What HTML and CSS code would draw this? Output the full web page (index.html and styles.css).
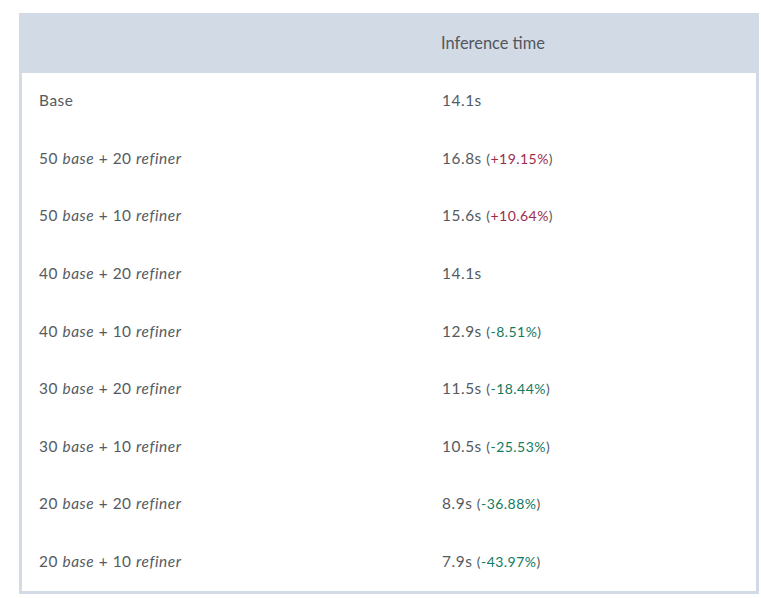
FILE: index.html
```html
<!DOCTYPE html>
<html>
<head>
<meta charset="utf-8">
<link rel="stylesheet" href="styles.css">
</head>
<body>
<div class="wrap">
<table class="tbl">
<thead>
<tr><th class="c1"></th><th class="c2">Inference time</th></tr>
</thead>
<tbody>
<tr><td class="c1">Base</td><td class="c2">14.1s</td></tr>
<tr><td class="c1">50 <em>base</em> + 20 <em>refiner</em></td><td class="c2">16.8s <span class="d">(<span class="up">+19.15%</span>)</span></td></tr>
<tr><td class="c1">50 <em>base</em> + 10 <em>refiner</em></td><td class="c2">15.6s <span class="d">(<span class="up">+10.64%</span>)</span></td></tr>
<tr><td class="c1">40 <em>base</em> + 20 <em>refiner</em></td><td class="c2">14.1s</td></tr>
<tr><td class="c1">40 <em>base</em> + 10 <em>refiner</em></td><td class="c2">12.9s <span class="d">(<span class="down">-8.51%</span>)</span></td></tr>
<tr><td class="c1">30 <em>base</em> + 20 <em>refiner</em></td><td class="c2">11.5s <span class="d">(<span class="down">-18.44%</span>)</span></td></tr>
<tr><td class="c1">30 <em>base</em> + 10 <em>refiner</em></td><td class="c2">10.5s <span class="d">(<span class="down">-25.53%</span>)</span></td></tr>
<tr><td class="c1">20 <em>base</em> + 20 <em>refiner</em></td><td class="c2">8.9s <span class="d">(<span class="down">-36.88%</span>)</span></td></tr>
<tr><td class="c1">20 <em>base</em> + 10 <em>refiner</em></td><td class="c2">7.9s <span class="d">(<span class="down">-43.97%</span>)</span></td></tr>
</tbody>
</table>
</div>
</body>
</html>
```
FILE: styles.css
```css
html, body { margin: 0; padding: 0; background: #fff; }
.wrap { padding: 13px 2px 4px 19px; }
.tbl {
  width: 740px;
  border-collapse: collapse;
  border: 3px solid #d2dae5;
  border-top: 0;
  font-family: "Lato", "Open Sans", sans-serif;
  color: #555a60;
}
.tbl th {
  background: #d2dae5;
  height: 58px;
  font-weight: 400;
  font-size: 16.4px;
  text-align: left;
  padding: 0 0 2px 0;
  color: #51565c;
}
.tbl td {
  height: 54.6px;
  padding: 0 0 3px 0;
  font-size: 15.4px;
  letter-spacing: 0.55px;
}
.tbl .c1 { width: 402px; padding-left: 17px; }
.tbl th.c2 { padding-left: 0; }
.tbl td.c2 { padding-left: 1px; }
.tbl em { font-style: italic; }
.d { font-size: 14px; letter-spacing: 0.45px; color: #555a60; }
.up { color: #9a2d4c; }
.down { color: #127a60; }
```
